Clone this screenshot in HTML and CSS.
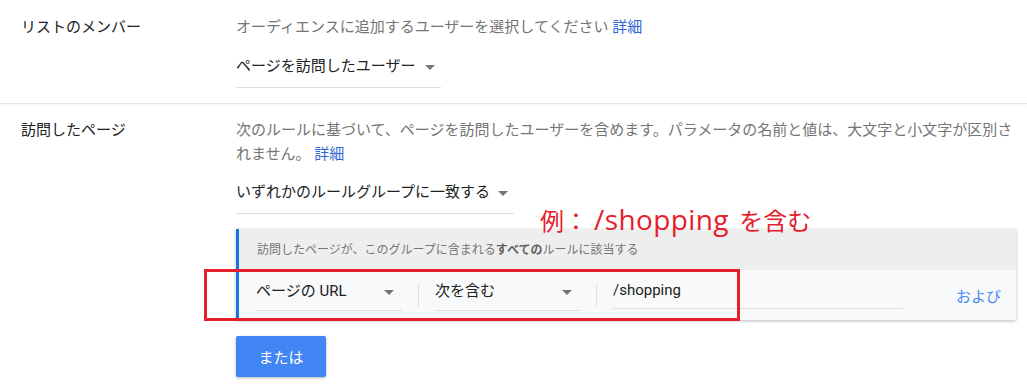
FILE: index.html
```html
<!DOCTYPE html>
<html lang="ja">
<head>
<meta charset="utf-8">
<link rel="stylesheet" href="styles.css">
</head>
<body>
<div class="section first">
  <div class="label">リストのメンバー</div>
  <div class="content">
    <p class="desc">オーディエンスに追加するユーザーを選択してください <a class="link">詳細</a></p>
    <div class="select sel-a"><span>ページを訪問したユーザー</span><span class="arrow"></span></div>
  </div>
</div>
<div class="section second">
  <div class="label">訪問したページ</div>
  <div class="content">
    <p class="desc">次のルールに基づいて、ページを訪問したユーザーを含めます。パラメータの名前と値は、大文字と小文字が区別さ<br>れません。 <a class="link">詳細</a></p>
    <div class="select sel-b"><span>いずれかのルールグループに一致する</span><span class="arrow"></span></div>
    <div class="card">
      <div class="note">例：<span class="note-latin">/shopping</span> を含む</div>
      <div class="card-head">訪問したページが、このグループに含まれる<b>すべての</b>ルールに該当する</div>
      <div class="card-row">
        <div class="field f-type"><span>ページの URL</span><span class="arrow"></span></div>
        <div class="divider"></div>
        <div class="field f-op"><span>次を含む</span><span class="arrow"></span></div>
        <div class="divider"></div>
        <div class="field f-val"><span>/shopping</span></div>
        <div class="and">および</div>
      </div>
      <div class="highlight"></div>
    </div>
    <button class="btn">または</button>
  </div>
</div>
</body>
</html>
```
FILE: styles.css
```css
html, body {
  margin: 0;
  padding: 0;
  background: #fff;
}
body {
  width: 1027px;
  height: 385px;
  overflow: hidden;
  font-family: Roboto, "Noto Sans CJK JP", sans-serif;
  font-size: 15px;
  color: #212121;
}
.section {
  display: flex;
}
.section.first {
  padding-top: 15px;
  padding-bottom: 15px;
  border-bottom: 1px solid #e6e6e6;
  box-shadow: 0 1px 2px rgba(0, 0, 0, 0.04);
}
.section.second {
  padding-top: 14px;
}
.label {
  width: 215px;
  padding-left: 21px;
  line-height: 24px;
  color: #202124;
  flex: none;
}
.content {
  width: 780px;
  flex: none;
}
.desc {
  margin: 0;
  width: 790px;
  line-height: 24px;
  color: #757575;
  white-space: nowrap;
}
.link {
  color: #3367d6;
  text-decoration: none;
}
.select {
  display: flex;
  align-items: center;
  line-height: 24px;
  padding-bottom: 9px;
  border-bottom: 1px solid #dcdcdc;
  color: #212121;
}
.section.first .select {
  margin-top: 15px;
}
.section.second .select {
  margin-top: 14px;
}
.sel-a { width: 205px; }
.sel-b { width: 278px; }
.arrow {
  width: 0;
  height: 0;
  border-left: 5px solid transparent;
  border-right: 5px solid transparent;
  border-top: 5px solid #757575;
  margin-left: 10px;
  margin-top: 2px;
}
.sel-b .arrow { margin-left: 8px; }
.card {
  position: relative;
  margin-top: 15px;
  width: 777px;
  border-left: 3px solid #1a73e8;
  box-shadow: 0 1px 3px rgba(0, 0, 0, 0.28);
  background: #f8f9fa;
}
.card-head {
  background: #eeeeee;
  height: 41px;
  line-height: 42px;
  padding-left: 18px;
  font-size: 12px;
  color: #757575;
}
.card-head b {
  color: #5f5f5f;
  font-weight: 700;
}
.card-row {
  display: flex;
  align-items: center;
  height: 50px;
  padding-left: 17px;
  padding-right: 15px;
}
.field {
  display: flex;
  align-items: center;
  justify-content: space-between;
  align-self: flex-start;
  margin-top: 9px;
  line-height: 24px;
  padding-bottom: 7px;
  border-bottom: 1px solid #dcdcdc;
  color: #212121;
}
.field .arrow {
  margin-right: 8px;
  margin-left: 0;
}
.f-type { width: 146px; }
.f-op { width: 145px; }
.f-val { width: 290px; margin-top: 8px; padding-bottom: 6px; }
.divider {
  width: 1px;
  height: 23px;
  background: #e0e0e0;
  margin: 0 16px;
}
.and {
  margin-left: auto;
  color: #4a8af4;
  font-size: 15px;
}
.highlight {
  position: absolute;
  left: -35px;
  top: 40px;
  width: 530px;
  height: 46px;
  border: 3px solid #e5202a;
}
.note {
  position: absolute;
  left: 301px;
  top: -25px;
  font-family: "Noto Sans CJK JP", sans-serif;
  font-size: 24px;
  line-height: 30px;
  color: #e5202a;
  white-space: nowrap;
}
.note-latin {
  font-family: "Open Sans", sans-serif;
  font-size: 28px;
  letter-spacing: 0.4px;
  margin-left: 6px;
  margin-right: 5px;
}
.btn {
  display: block;
  margin-top: 16px;
  width: 90px;
  height: 41px;
  border: none;
  border-radius: 2px;
  background: #4285f4;
  color: #fff;
  font-family: Roboto, "Noto Sans CJK JP", sans-serif;
  font-size: 15px;
  box-shadow: 0 1px 3px rgba(0, 0, 0, 0.3);
  padding: 0;
}
```
